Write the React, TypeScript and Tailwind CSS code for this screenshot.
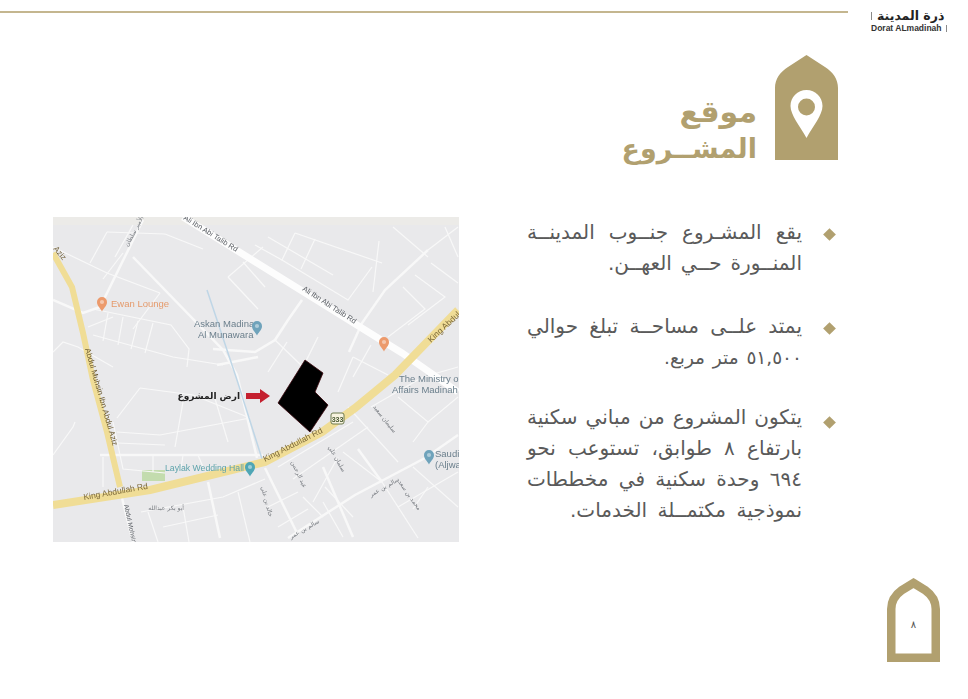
import React from 'react';

const thinRoads = [
  '54,15 37,46', '54,15 112,17', '80,8 62,40', '70,36 50,62', '0,30 54,56 107,76', '107,76 80,112',
  '40,92 118,108 136,132 134,150', '35,110 60,100', '55,96 50,124', '70,100 65,128', '85,104 78,132', '100,106 92,136',
  '40,118 120,140 170,148', '0,135 10,125 25,130 60,150', '112,17 150,32', '175,60 210,30', '175,60 205,92', '190,45 212,70',
  '242,16 329,46', '242,16 229,43 295,83 319,50', '229,43 202,28', '262,22 248,52', '215,20 280,58', '320,75 326,24',
  '350,70 372,92 335,120', '362,58 392,80 355,108', '378,46 405,66', '375,33 405,10', '392,10 405,40', '340,10 375,40',
  '222,123 250,150', '250,150 265,120', '300,140 285,175', '300,140 335,158', '318,128 300,160', '234,125 215,155',
  '64,215 107,218 197,201', '87,171 64,201', '87,171 140,178 197,201', '130,185 122,230', '160,175 175,225', '64,226 112,228',
  '60,205 70,252 112,256', '100,238 100,255', '130,238 128,252', '145,238 150,250', '50,240 50,270', '0,238 20,210 22,205',
  '88,295 170,280 212,262', '95,295 105,325', '130,290 136,325', '185,275 197,325', '110,310 165,298',
  '225,250 300,205', '240,262 315,210', '260,285 285,240', '272,270 300,300', '250,280 270,300', '290,235 329,265',
  '295,190 345,245', '329,265 365,321', '360,250 405,290', '345,290 405,255', '375,270 360,292', '318,190 370,160 405,150',
  '345,180 375,205 405,180', '375,205 360,225', '215,290 245,275', '225,310 255,292', '290,320 270,285',
];

const wideRoads = [
  '90,3 54,76 47,90 30,96 0,83', '80,40 170,133 184,158 204,241', '375,33 332,73 309,106 296,135',
  '249,83 235,103 222,123 202,135 160,132', '47,238 210,238', '405,218 372,241 302,278 235,321',
  '212,251 245,318', '155,265 167,321', '69,281 80,325', '329,265 305,232', '270,250 300,320', '164,148 205,140',
];

const mapLabel = 'font-["Liberation_Sans",sans-serif]';

function Pin({ x, y, color }: { x: number; y: number; color: string }) {
  const r = 5;
  return (
    <g transform={`translate(${x} ${y})`}>
      <path d={`M${-r} 0a${r} ${r} 0 1 1 ${r * 2} 0c0 ${r * 0.8} ${-r * 0.6} ${r * 1.1} ${-r} ${r * 1.9}c${-r * 0.4} ${-r * 0.8} ${-r} ${-r * 1.1} ${-r} ${-r * 1.9}z`} fill={color} />
      <circle r={r * 0.42} fill="#ffffff" opacity="0.45" />
    </g>
  );
}

function ProjectMap() {
  return (
    <svg viewBox="0 0 406 325" className="block w-[406px] h-[325px] bg-[#e9e9eb] blur-[0.5px]" dir="ltr">
      <rect width="406" height="8" fill="#ecebe8" />
      <rect x="89" y="253" width="23" height="11" fill="#c3dcae" />
      {thinRoads.map((points) => (
        <polyline key={points} points={points} fill="none" stroke="#f8f8f8" strokeWidth="1.2" />
      ))}
      {wideRoads.map((points) => (
        <polyline key={points} points={points} fill="none" stroke="#f8f8f8" strokeWidth="2.5" />
      ))}
      <polyline points="154,73 184,163 210,245" fill="none" stroke="#bfd6e6" strokeWidth="1.5" />
      <polyline points="130,0 349,136 405,175" fill="none" stroke="#fdfdfd" strokeWidth="7" />
      <polyline points="0,36 19,70 30,116 40,163 54,215 67,270" fill="none" stroke="#f0dd96" strokeWidth="6" />
      <polyline points="0,288 97,273 212,245 269,215 302,191 342,158 405,93" fill="none" stroke="#f0dd96" strokeWidth="8" />

      <polygon points="252,143 270,156 262,175 275,188 257,215 225,186" fill="#000000" stroke="#3a060c" strokeWidth="0.8" />
      <path d="M193 176h14v-4l10 7-10 7v-4h-14z" fill="#c4202f" />

      <g className={mapLabel} fontSize="8.5">
        <text x="58" y="90" fill="#e59a6b" fontSize="9.5">Ewan Lounge</text>
        <text x="141" y="110" fill="#6b7f8c" fontSize="9.5">Askan Madina</text>
        <text x="145" y="121" fill="#6b7f8c" fontSize="9.5">Al Munawara</text>
        <text x="346" y="165" fill="#6b7f8c" fontSize="9.5">The Ministry of</text>
        <text x="339" y="176" fill="#6b7f8c" fontSize="9.5">Affairs Madinah b</text>
        <text x="382" y="240" fill="#6b7f8c" fontSize="9.5">Saudi</text>
        <text x="382" y="251" fill="#6b7f8c" fontSize="9.5">(Aljwa</text>
        <text x="112" y="254" fill="#5da3ab" fontSize="8.7">Laylak Wedding Hall</text>
        <text transform="translate(31 283) rotate(-10)" fill="#7d6a3a">King Abdullah Rd</text>
        <text transform="translate(212 245) rotate(-27)" fill="#7d6a3a">King Abdullah Rd</text>
        <text transform="translate(378 126) rotate(-43)" fill="#7d6a3a">King Abdul</text>
        <text transform="translate(249 73) rotate(33)" fill="#5e6268" fontSize="7.5">Ali Ibn Abi Talib Rd</text>
        <text transform="translate(130 2) rotate(32)" fill="#5e6268" fontSize="7.5">Ali Ibn Abi Talib Rd</text>
        <text transform="translate(32 132) rotate(74)" fill="#6b5a30" fontSize="8">Abdul Muhsin Ibn Abdul Aziz</text>
        <text transform="translate(0 32) rotate(50)" fill="#6b5a30" fontSize="8">Aziz</text>
        <text transform="translate(71 288) rotate(78)" fill="#5e6268" fontSize="6.5">Abdul Mohsin</text>
      </g>

      <g className='font-["DejaVu_Sans",sans-serif]' fill="#777b80" fontSize="6">
        <text transform="translate(75 30) rotate(-62)">شارع الأمير سلطان</text>
        <text transform="translate(131 293)" direction="rtl">أبو بكر عبدالله</text>
        <text transform="translate(320 190) rotate(52)">سليمان سعيد</text>
        <text transform="translate(275 230) rotate(60)">سلمان علي</text>
        <text transform="translate(238 245) rotate(65)">عبد الرحمن</text>
        <text transform="translate(318 280) rotate(-30)">سالم بن عمر</text>
        <text transform="translate(238 322) rotate(-30)">سالم بن عمر</text>
        <text transform="translate(345 265) rotate(55)">محمد بن سعد</text>
        <text transform="translate(208 270) rotate(75)">خالد بن علي</text>
      </g>

      <text x="187" y="182" direction="rtl" className='font-["DejaVu_Sans",sans-serif]' fill="#222222" fontSize="9" fontWeight="700">ارض المشروع</text>

      <Pin x={49} y={85} color="#ec9a6c" />
      <Pin x={204} y={109} color="#6fa3bb" />
      <Pin x={331} y={125} color="#ec9a6c" />
      <Pin x={197} y={250} color="#4fa6b5" />
      <Pin x={376} y={238} color="#6fa3bb" />

      <g transform="translate(278 196)">
        <rect width="13" height="11" rx="2" fill="#f7f3df" stroke="#6d7a4f" />
        <text x="6.5" y="8.5" textAnchor="middle" fontSize="7" fontWeight="700" fill="#4b5a33" className={mapLabel}>333</text>
      </g>
    </svg>
  );
}

function TitleArch() {
  return (
    <svg viewBox="0 0 63 105" className="w-[63px] h-[105px] shrink-0">
      <path d="M31.500 0L50 12C58 17 63 24 63 33V105H0V33C0 24 5 17 13 12Z" fill="#b1a06f" />
      <path d="M31.500 35C22.500 35 15.500 42 15.500 51C15.500 60 25 71 31.500 83C38 71 47.500 60 47.500 51C47.500 42 40.500 35 31.500 35Z" fill="#ffffff" />
      <circle cx="31.500" cy="52" r="8.500" fill="#b1a06f" />
    </svg>
  );
}

function PageArch({ page }: { page: string }) {
  return (
    <div className="relative w-[53px] h-[84px]">
      <svg viewBox="0 0 53 84" className="block w-[53px] h-[84px]">
        <path d="M26.500 5L38 12C45 17 48.750 23 48.750 31V79.750H4.250V31C4.250 23 8 17 15 12Z" fill="none" stroke="#b1a06f" strokeWidth="8.500" />
      </svg>
      <span className='absolute inset-0 flex items-center justify-center pt-[8px] text-[10px] text-[#555555] font-["DejaVu_Sans",sans-serif]'>{page}</span>
    </div>
  );
}

const bullets = [
  {
    box: 'h-[94px]',
    dot: 'top-[13px]',
    lines: [
      { text: 'يقع المشـروع جنــوب المدينــة', width: 'w-[275px]', size: 'text-[20px]' },
      { text: 'المنــورة حــي العهــن.', width: 'w-[194px]', size: 'text-[20px]' },
    ],
  },
  {
    box: 'h-[91px]',
    dot: 'top-[13px]',
    lines: [
      { text: 'يمتد علــى مساحــة تبلغ حوالي', width: 'w-[275px]', size: 'text-[20px]' },
      { text: '٥١,٥٠٠ متر مربع.', width: 'w-[138px]', size: 'text-[18.500px]' },
    ],
  },
  {
    box: 'h-auto',
    dot: 'top-[16px]',
    lines: [
      { text: 'يتكون المشروع من مباني سكنية', width: 'w-[275px]', size: 'text-[20px]' },
      { text: 'بارتفاع ٨ طوابق، تستوعب نحو', width: 'w-[275px]', size: 'text-[20px]' },
      { text: '٦٩٤ وحدة سكنية في مخططات', width: 'w-[275px]', size: 'text-[20px]' },
      { text: 'نموذجية مكتمــلة الخدمات.', width: 'w-[232px]', size: 'text-[20px]' },
    ],
  },
];

export default function App() {
  return (
    <div dir="ltr" className='relative flex flex-col w-[968px] h-[699px] overflow-hidden bg-white font-["DejaVu_Sans",sans-serif]'>
      {/* شريط العنوان */}
      <header className="flex items-start h-[55px]">
        <div className="w-[848px] h-[1.5px] mt-[11px] bg-[#c4b68f]" />
        <div className="ml-[23px] mt-[9px] flex flex-col items-start w-[78px]">
          <div className="flex items-center gap-[5px] h-[14px]">
            <span className="w-[1px] h-[8px] bg-[#8a8a8a]" />
            <span dir="rtl" className="text-[12.500px] leading-[14px] font-bold text-[#222222] whitespace-nowrap">ذرة المدينة</span>
          </div>
          <div className="flex items-center gap-[4px] h-[10px]">
            <span className='text-[8.500px] leading-[10px] font-bold text-[#333333] whitespace-nowrap font-["Liberation_Sans",sans-serif]'>Dorat ALmadinah</span>
            <span className="w-[1px] h-[7px] bg-[#8a8a8a]" />
          </div>
        </div>
      </header>

      {/* عنوان الصفحة */}
      <div className="flex justify-end items-start gap-[18px] pr-[130px] h-[162px]">
        <div dir="rtl" className="pt-[38px] text-[#b1a06f] text-[30px] leading-[37px] font-bold text-right">
          <div>موقع</div>
          <div className="text-[27px]">المشــروع</div>
        </div>
        <TitleArch />
      </div>

      {/* المحتوى */}
      <main className="flex items-start pl-[53px]">
        <ProjectMap />
        <div className="ml-[67px] w-[276px]">
          {bullets.map((item) => (
            <div key={item.lines[0].text} className={`relative ${item.box}`}>
              {item.lines.map((line) => (
                <div key={line.text} dir="rtl" className={`${line.width} ${line.size} ml-auto leading-[31px] text-[#5a5a5a] text-justify [text-align-last:justify]`}>{line.text}</div>
              ))}
              <div className={`absolute left-[299px] w-[9px] h-[9px] rotate-45 bg-[#b1a06f] ${item.dot}`} />
            </div>
          ))}
        </div>
      </main>

      {/* رقم الصفحة */}
      <footer className="flex justify-end mt-auto pr-[28px] pb-[37px]">
        <PageArch page="٨" />
      </footer>
    </div>
  );
}
